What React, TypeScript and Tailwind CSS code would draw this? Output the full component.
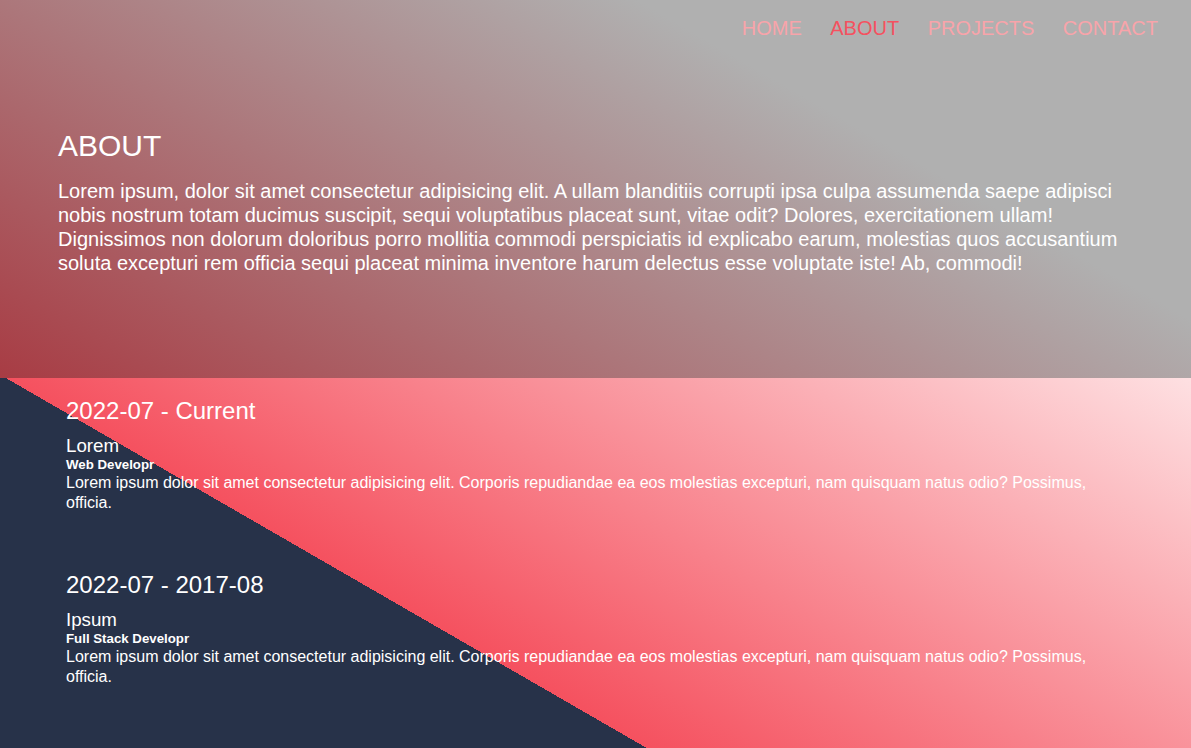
import React from 'react';

const navLinks = ['HOME', 'ABOUT', 'PROJECTS', 'CONTACT'];

const jobs = [
  {
    period: '2022-07 - Current',
    company: 'Lorem',
    role: 'Web Developr',
  },
  {
    period: '2022-07 - 2017-08',
    company: 'Ipsum',
    role: 'Full Stack Developr',
  },
];

const jobText =
  'Lorem ipsum dolor sit amet consectetur adipisicing elit. Corporis repudiandae ea eos molestias excepturi, nam quisquam natus odio? Possimus, officia.';

export default function App() {
  return (
    <div className="font-['Liberation_Sans',Arial,sans-serif] text-white">
      {/* Hero / about */}
      <section className="h-[378px] bg-[linear-gradient(30deg,#a83c44_0%,#b0b0b0_70%)]">
        <nav className="flex justify-end gap-[28.5px] pr-[33px] pt-[16px] text-[20px] leading-[24px]">
          {navLinks.map((link) => (
            <a
              key={link}
              href="#"
              className={link === 'ABOUT' ? 'text-[#f5515f]' : 'text-[#f8a4aa]'}
            >
              {link}
            </a>
          ))}
        </nav>
        <div className="px-[58px] pt-[88px]">
          <h1 className="text-[30px] leading-[36px]">ABOUT</h1>
          <p className="mt-[15px] text-[20px] leading-[24px]">
            Lorem ipsum, dolor sit amet consectetur adipisicing elit. A ullam blanditiis corrupti ipsa culpa
            assumenda saepe adipisci nobis nostrum totam ducimus suscipit, sequi voluptatibus placeat sunt, vitae
            odit? Dolores, exercitationem ullam! Dignissimos non dolorum doloribus porro mollitia commodi
            perspiciatis id explicabo earum, molestias quos accusantium soluta excepturi rem officia sequi placeat
            minima inventore harum delectus esse voluptate iste! Ab, commodi!
          </p>
        </div>
      </section>

      {/* Experience timeline */}
      <section className="h-[370px] bg-[linear-gradient(30deg,#273249_35.3%,#f5515f_35.3%,#fee0e2_100%)] px-[66px] pt-[19px]">
        <div className="flex flex-col gap-[58px]">
          {jobs.map((job) => (
            <div key={job.period}>
              <h2 className="text-[24px] leading-[28px]">{job.period}</h2>
              <h3 className="mt-[10px] text-[18.72px] leading-[22px]">{job.company}</h3>
              <h5 className="text-[13.28px] font-bold leading-[16px]">{job.role}</h5>
              <p className="text-[16px] leading-[20px]">{jobText}</p>
            </div>
          ))}
        </div>
      </section>
    </div>
  );
}
